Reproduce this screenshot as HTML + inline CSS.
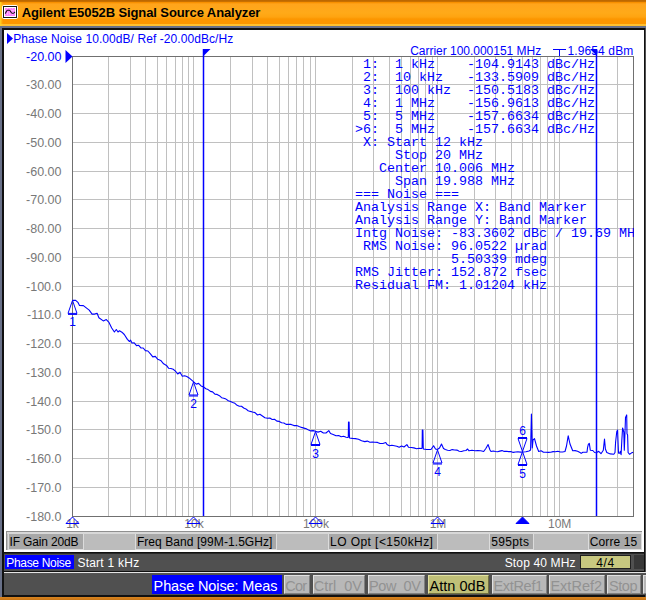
<!DOCTYPE html>
<html><head><meta charset="utf-8"><title>Agilent E5052B Signal Source Analyzer</title>
<style>
html,body{margin:0;padding:0;}
body{width:646px;height:600px;overflow:hidden;position:relative;background:#000;font-family:"Liberation Sans",sans-serif;}
div{position:absolute;box-sizing:border-box;white-space:pre;}
#title{left:0;top:0;width:646px;height:26px;background:linear-gradient(to bottom,#b86400 0px,#c87000 1.5px,#f89000 2.5px,#ffa41c 4px,#ffaa18 13px,#ffa410 17px,#fc9600 19px,#fc9600 23.5px,#ffc030 24.5px,#ffc030 26px);}
#ttext{left:22px;top:5px;font-weight:bold;font-size:13.5px;line-height:16px;color:#000;transform-origin:0 0;}
#frame{left:0;top:26px;width:646px;height:571px;background:#687088;}
#frame2{left:2px;top:28px;width:643px;height:569px;background:#101010;}
#white{left:4px;top:30px;width:640px;height:522px;background:#fff;}
#rt{left:645px;top:28px;width:1px;height:569px;background:#505050;}
#strip{left:6px;top:531px;width:636px;height:19px;background:#bcbcbc;border-top:1px solid #909090;border-left:1px solid #909090;box-shadow:inset 0 2px 0 #d8d8d8;}
.sb{top:534px;height:16px;background:#a8a8a8;border:1px solid #dcdcdc;border-top:none;}
#bar1{left:4px;top:553px;width:640px;height:18px;background:#505050;border-top:1px solid #282828;}
#pn{left:5px;top:555px;width:69px;height:14px;background:#0000ff;color:#fff;font-size:12.5px;line-height:14px;text-align:center;}
.w{color:#fff;font-size:12.5px;line-height:14px;top:555px;}
#pg{left:580px;top:555px;width:51px;height:14px;background:#c8c880;border:1px solid #202020;color:#000;font-size:12.5px;line-height:14px;text-align:center;}
#dk{left:634px;top:555px;width:10px;height:14px;background:#383838;}
#hl{left:4px;top:572px;width:642px;height:2px;background:#e4e4e4;border-bottom:1px solid #555;}
#bar2{left:4px;top:574px;width:642px;height:21px;background:#505050;}
.bb{top:575px;height:19px;background:#b8b8b8;border:1px solid #d8d8d8;}
#orange{left:0;top:597px;width:646px;height:3px;background:linear-gradient(#d88420,#c87414);}
svg{position:absolute;left:0;top:0;}
.mk{fill:none;stroke:#0000ff;stroke-width:1;}
.xf{fill:#0000ff;stroke:#0000ff;stroke-width:1;}
.ml{fill:#0000ff;font-family:"Liberation Sans",sans-serif;font-size:12px;text-anchor:middle;}
.yl{left:20px;width:41.5px;text-align:right;font-size:12.5px;line-height:14px;}
.xl{top:516.7px;width:40px;text-align:center;font-size:12px;line-height:14px;color:#787878;}
#hdr{left:14.5px;top:31px;font-size:12.5px;line-height:15px;color:#0000ff;}
#car{left:410px;top:43px;font-size:12px;line-height:14px;color:#0000ff;}
#car2{left:567px;top:43px;font-size:12px;line-height:14px;color:#0000ff;}
#mono{left:355px;top:57.6px;width:278.5px;overflow:hidden;font-family:"Liberation Mono",monospace;font-size:13.33px;line-height:13px;color:#0000ff;}
</style></head><body>
<div id="title"></div><div style="left:0;top:2px;width:3px;height:24px;background:linear-gradient(to right,#ffd428,rgba(255,200,40,0))"></div><svg id="icon" width="20" height="24" viewBox="0 0 20 24" style="left:0;top:0"><rect x="2" y="5" width="16" height="14" rx="2.2" fill="#fff"/><rect x="3.5" y="6.5" width="13" height="11" fill="#fff" stroke="#181818" stroke-width="1"/><rect x="5" y="8" width="10" height="8" fill="#ff84ff"/><path d="M5,10.5 H15 M5,13.5 H15 M7.5,8 V16 M10,8 V16 M12.5,8 V16" stroke="#ffd0ff" stroke-width="0.6" stroke-dasharray="1 1" fill="none"/><path d="M5.2,13.7 C6.2,12.4 6.4,10.3 7.6,10.3 L9.4,10.3 C10.6,10.3 10.9,13.3 12.1,13.3 L13.2,13.3 C14.1,13.3 14.4,12.4 14.9,12" fill="none" stroke="#101010" stroke-width="1.1"/></svg>
<div style="left:21.7px;top:5.4px;font-size:13px;line-height:16px;color:#000;letter-spacing:-0.10px;font-weight:bold;">Agilent E5052B Signal Source Analyzer</div>
<div id="frame"></div><div id="frame2"></div><div id="white"></div><div id="rt"></div>
<div class="yl" style="top:50.40px;color:#0000ff">-20.00</div><div class="yl" style="top:78.40px;color:#787878">-30.00</div><div class="yl" style="top:107.40px;color:#787878">-40.00</div><div class="yl" style="top:136.40px;color:#787878">-50.00</div><div class="yl" style="top:165.40px;color:#787878">-60.00</div><div class="yl" style="top:193.40px;color:#787878">-70.00</div><div class="yl" style="top:222.40px;color:#787878">-80.00</div><div class="yl" style="top:251.40px;color:#787878">-90.00</div><div class="yl" style="top:280.40px;color:#787878">-100.0</div><div class="yl" style="top:308.40px;color:#787878">-110.0</div><div class="yl" style="top:337.40px;color:#787878">-120.0</div><div class="yl" style="top:366.40px;color:#787878">-130.0</div><div class="yl" style="top:395.40px;color:#787878">-140.0</div><div class="yl" style="top:423.40px;color:#787878">-150.0</div><div class="yl" style="top:452.40px;color:#787878">-160.0</div><div class="yl" style="top:481.40px;color:#787878">-170.0</div><div class="yl" style="top:510.40px;color:#787878">-180.0</div>
<div class="xl" style="left:52.5px">1k</div><div class="xl" style="left:174.0px">10k</div><div class="xl" style="left:296.0px">100k</div><div class="xl" style="left:418.0px">1M</div><div class="xl" style="left:539.7px">10M</div>
<svg id="plot" width="646" height="600" viewBox="0 0 646 600">
<g stroke="#c0c0c0" stroke-width="1" shape-rendering="crispEdges"><line x1="73" y1="84.5" x2="633" y2="84.5"/><line x1="73" y1="113.5" x2="633" y2="113.5"/><line x1="73" y1="142.5" x2="633" y2="142.5"/><line x1="73" y1="171.5" x2="633" y2="171.5"/><line x1="73" y1="199.5" x2="633" y2="199.5"/><line x1="73" y1="228.5" x2="633" y2="228.5"/><line x1="73" y1="257.5" x2="633" y2="257.5"/><line x1="73" y1="286.5" x2="633" y2="286.5"/><line x1="73" y1="314.5" x2="633" y2="314.5"/><line x1="73" y1="343.5" x2="633" y2="343.5"/><line x1="73" y1="372.5" x2="633" y2="372.5"/><line x1="73" y1="401.5" x2="633" y2="401.5"/><line x1="73" y1="429.5" x2="633" y2="429.5"/><line x1="73" y1="458.5" x2="633" y2="458.5"/><line x1="73" y1="487.5" x2="633" y2="487.5"/><line x1="108.5" y1="57" x2="108.5" y2="516"/><line x1="130.5" y1="57" x2="130.5" y2="516"/><line x1="145.5" y1="57" x2="145.5" y2="516"/><line x1="157.5" y1="57" x2="157.5" y2="516"/><line x1="166.5" y1="57" x2="166.5" y2="516"/><line x1="175.5" y1="57" x2="175.5" y2="516"/><line x1="182.5" y1="57" x2="182.5" y2="516"/><line x1="188.5" y1="57" x2="188.5" y2="516"/><line x1="193.5" y1="57" x2="193.5" y2="516"/><line x1="230.5" y1="57" x2="230.5" y2="516"/><line x1="252.5" y1="57" x2="252.5" y2="516"/><line x1="267.5" y1="57" x2="267.5" y2="516"/><line x1="279.5" y1="57" x2="279.5" y2="516"/><line x1="288.5" y1="57" x2="288.5" y2="516"/><line x1="296.5" y1="57" x2="296.5" y2="516"/><line x1="303.5" y1="57" x2="303.5" y2="516"/><line x1="310.5" y1="57" x2="310.5" y2="516"/><line x1="315.5" y1="57" x2="315.5" y2="516"/><line x1="352.5" y1="57" x2="352.5" y2="516"/><line x1="373.5" y1="57" x2="373.5" y2="516"/><line x1="389.5" y1="57" x2="389.5" y2="516"/><line x1="401.5" y1="57" x2="401.5" y2="516"/><line x1="410.5" y1="57" x2="410.5" y2="516"/><line x1="418.5" y1="57" x2="418.5" y2="516"/><line x1="425.5" y1="57" x2="425.5" y2="516"/><line x1="432.5" y1="57" x2="432.5" y2="516"/><line x1="437.5" y1="57" x2="437.5" y2="516"/><line x1="474.5" y1="57" x2="474.5" y2="516"/><line x1="495.5" y1="57" x2="495.5" y2="516"/><line x1="511.5" y1="57" x2="511.5" y2="516"/><line x1="522.5" y1="57" x2="522.5" y2="516"/><line x1="532.5" y1="57" x2="532.5" y2="516"/><line x1="540.5" y1="57" x2="540.5" y2="516"/><line x1="547.5" y1="57" x2="547.5" y2="516"/><line x1="554.5" y1="57" x2="554.5" y2="516"/><line x1="559.5" y1="57" x2="559.5" y2="516"/><line x1="596.5" y1="57" x2="596.5" y2="516"/><line x1="617.5" y1="57" x2="617.5" y2="516"/></g>
<rect x="72.5" y="56.5" width="561" height="460" fill="none" stroke="#707070" stroke-width="1" shape-rendering="crispEdges"/>
<path d="M203.5,49 L203.5,516" stroke="#0000ff" stroke-width="1.5" fill="none"/>
<path d="M203,49 L210.5,49 L203.5,56 Z" fill="#0000ff"/>
<path d="M596.5,49 L596.5,516" stroke="#0000ff" stroke-width="1.5" fill="none"/>
<path d="M590,49 L597,49 L597,56 Z" fill="#0000ff"/>
<path d="M553,49.5 L566,49.5 M559.5,49.5 L559.5,56" stroke="#0000ff" stroke-width="1" fill="none"/>
<path d="M65.5,50 L72.5,56.5 L65.5,63 Z" fill="#0000ff"/>
<path d="M7,33 L13,38.5 L7,44 Z" fill="#0000ff"/>
<path d="M72.5,300.4 L75.4,300.2 L77.9,302.3 L79.5,305.4 L83.4,305.6 L86.3,307.9 L89.2,310.1 L92.1,314.1 L94.6,314.1 L97.1,313.2 L98.9,317.8 L103.3,320.9 L106.3,319.6 L109.0,322.4 L111.7,328.0 L114.4,332.0 L116.3,329.5 L118.0,332.0 L119.5,330.8 L121.9,332.2 L124.3,334.5 L127.4,339.4 L129.5,341.5 L130.6,340.2 L132.0,343.0 L134.2,342.9 L136.5,345.6 L138.7,345.3 L140.9,347.9 L143.2,348.0 L145.4,350.6 L147.9,351.0 L150.4,353.8 L152.8,356.9 L155.3,356.4 L157.8,359.3 L160.7,360.4 L163.6,363.8 L166.5,365.4 L168.7,368.3 L170.9,368.5 L173.2,369.3 L175.4,371.1 L177.7,374.0 L180.0,372.3 L182.3,376.3 L184.6,375.8 L186.8,376.6 L189.1,377.9 L191.4,379.8 L193.7,381.8 L196.2,384.1 L198.6,383.4 L201.1,385.9 L203.6,387.0 L205.9,388.7 L208.1,389.6 L210.4,391.4 L212.6,391.9 L214.9,394.2 L217.1,394.4 L219.4,395.7 L221.6,397.7 L223.8,398.3 L226.0,399.1 L228.3,400.7 L230.5,401.6 L232.7,402.5 L234.9,403.3 L237.1,405.3 L239.3,406.2 L241.5,406.3 L243.7,408.0 L245.9,408.9 L248.1,410.7 L250.3,411.4 L252.5,412.0 L255.0,412.6 L257.5,415.0 L259.9,414.3 L262.4,416.0 L264.9,417.7 L267.4,418.2 L269.8,418.1 L272.2,419.5 L274.5,419.2 L276.9,421.1 L279.3,421.4 L281.6,422.7 L283.9,423.0 L286.1,424.4 L288.4,424.4 L291.1,424.4 L293.9,425.6 L296.6,425.6 L299.1,426.6 L301.5,427.4 L304.0,428.1 L306.3,428.7 L308.6,430.1 L310.8,430.9 L313.1,430.6 L315.4,431.3 L318.0,432.1 L320.7,431.3 L323.4,433.0 L326.0,433.0 L328.8,430.6 L330.5,433.5 L333.2,434.4 L336.0,435.7 L338.7,435.5 L341.2,436.7 L343.6,436.3 L346.1,437.3 L347.8,437.5 L348.3,437.0 L348.5,422.0 L349.1,422.0 L349.5,438.0 L352.4,438.4 L355.4,438.6 L358.5,439.3 L361.6,440.8 L364.8,441.6 L367.3,441.1 L369.9,442.2 L372.4,442.0 L374.9,442.2 L377.5,442.4 L380.0,443.5 L382.9,443.5 L385.8,442.5 L387.0,444.5 L389.5,445.8 L391.9,445.3 L394.3,445.7 L396.8,446.2 L399.2,447.3 L401.6,446.0 L404.0,447.0 L406.9,444.6 L408.5,447.3 L411.2,447.5 L413.9,447.9 L416.6,448.7 L419.3,448.3 L421.5,448.5 L422.1,448.0 L422.3,430.0 L422.9,430.0 L423.3,449.0 L426.7,449.5 L431.0,449.5 L433.6,445.8 L435.5,449.0 L437.3,449.5 L439.5,448.0 L441.5,444.1 L443.5,448.5 L445.3,449.5 L447.6,450.2 L449.9,450.5 L452.2,449.6 L454.6,450.0 L456.9,450.1 L459.2,451.2 L461.5,451.5 L463.8,450.8 L466.0,450.5 L467.6,449.0 L469.0,450.8 L472.0,450.2 L475.0,450.8 L477.9,450.5 L480.8,450.8 L483.7,451.5 L486.0,448.3 L488.1,444.6 L490.0,450.0 L491.0,451.5 L493.2,451.0 L495.4,451.5 L497.6,451.7 L499.8,451.1 L502.0,450.6 L504.2,451.4 L506.4,451.3 L508.6,451.6 L510.8,451.5 L513.2,452.4 L515.6,452.0 L517.9,451.8 L520.3,452.1 L522.7,452.0 L525.9,451.8 L529.0,451.0 L530.6,450.0 L531.4,414.0 L532.3,448.0 L533.0,440.0 L534.5,438.7 L536.5,446.0 L538.7,451.5 L541.1,450.8 L543.5,452.3 L545.9,452.2 L548.3,452.4 L550.7,452.3 L553.1,451.6 L555.5,451.7 L557.9,451.2 L560.3,452.0 L562.6,452.0 L565.0,451.5 L566.5,446.0 L568.2,435.9 L570.0,444.0 L572.7,450.8 L575.1,450.6 L577.6,451.2 L580.0,452.5 L581.2,453.4 L582.9,452.3 L587.0,452.2 L587.6,447.3 L588.4,444.1 L589.3,443.4 L590.3,450.2 L592.8,450.5 L594.6,452.5 L596.3,452.7 L598.7,451.3 L601.0,453.7 L603.3,450.2 L604.5,439.1 L605.4,449.0 L606.8,452.5 L610.3,453.9 L613.8,454.3 L615.0,452.5 L615.6,442.0 L616.8,431.5 L617.6,430.1 L618.0,440.8 L618.5,453.1 L619.7,453.1 L620.3,451.3 L621.1,454.6 L621.8,440.8 L622.6,428.0 L623.8,432.0 L624.3,450.2 L624.9,435.0 L625.5,417.5 L626.7,414.9 L627.0,433.8 L627.6,435.0 L628.1,452.5 L629.6,454.3 L631.3,453.1 L633.1,452.3" fill="none" stroke="#0000ff" stroke-width="1.1" stroke-linejoin="round"/>
<g><path d="M72.5,300.4 L68.0,313.4 L77.0,313.4 Z M68.0,314.4 L77.0,314.4" class="mk"/><text x="72.5" y="326.4" class="ml">1</text><path d="M193.5,382 L189.0,395 L198.0,395 Z M189.0,396 L198.0,396" class="mk"/><text x="193.5" y="408" class="ml">2</text><path d="M315.5,431.5 L311.0,444.5 L320.0,444.5 Z M311.0,445.5 L320.0,445.5" class="mk"/><text x="315.5" y="457.5" class="ml">3</text><path d="M437.5,450 L433.0,463 L442.0,463 Z M433.0,464 L442.0,464" class="mk"/><text x="437.5" y="476" class="ml">4</text><path d="M522.5,451.5 L518.0,464.5 L527.0,464.5 Z M518.0,465.5 L527.0,465.5" class="mk"/><text x="522.5" y="477.5" class="ml">5</text><path d="M522.5,451.5 L518.0,438.5 L527.0,438.5 Z M518.0,437.5 L527.0,437.5" class="mk"/><text x="522.5" y="435.0" class="ml">6</text><path d="M72.5,517 L66.0,523.5 L79.0,523.5 Z" class="mk"/><path d="M193.5,517 L187.0,523.5 L200.0,523.5 Z" class="mk"/><path d="M315.5,517 L309.0,523.5 L322.0,523.5 Z" class="mk"/><path d="M437.5,517 L431.0,523.5 L444.0,523.5 Z" class="mk"/><path d="M522.5,517 L516.0,523.5 L529.0,523.5 Z" class="xf"/></g>
</svg>
<div style="left:13.2px;top:32px;font-size:12px;line-height:14px;color:#0000ff;letter-spacing:0.07px;">Phase Noise 10.00dB/ Ref -20.00dBc/Hz</div>
<div style="left:410.2px;top:43.6px;font-size:12px;line-height:14px;color:#0000ff;letter-spacing:-0.02px;">Carrier 100.000151 MHz</div><div style="left:567.4px;top:43.6px;font-size:12px;line-height:14px;color:#0000ff;letter-spacing:0.13px;">1.9654 dBm</div>
<div id="mono"> 1:  1 kHz    -104.9143 dBc/Hz
 2:  10 kHz   -133.5909 dBc/Hz
 3:  100 kHz  -150.5183 dBc/Hz
 4:  1 MHz    -156.9613 dBc/Hz
 5:  5 MHz    -157.6634 dBc/Hz
&gt;6:  5 MHz    -157.6634 dBc/Hz
 X: Start 12 kHz
     Stop 20 MHz
   Center 10.006 MHz
     Span 19.988 MHz
=== Noise ===
Analysis Range X: Band Marker
Analysis Range Y: Band Marker
Intg Noise: -83.3602 dBc / 19.69 MHz
 RMS Noise: 96.0522 µrad
            5.50339 mdeg
RMS Jitter: 152.872 fsec
Residual FM: 1.01204 kHz</div>
<div id="strip"></div>
<div class="sb" style="left:8px;width:76px"></div><div style="left:9.5px;top:535px;font-size:12px;line-height:14px;color:#000;letter-spacing:-0.15px;">IF Gain 20dB</div>
<div class="sb" style="left:135px;width:142px"></div><div style="left:136.9px;top:535px;font-size:12px;line-height:14px;color:#000;letter-spacing:0.07px;">Freq Band [99M-1.5GHz]</div>
<div class="sb" style="left:328px;width:110px"></div><div style="left:330.1px;top:535px;font-size:12px;line-height:14px;color:#000;letter-spacing:0.43px;">LO Opt [&lt;150kHz]</div>
<div class="sb" style="left:489px;width:45px"></div><div style="left:491.2px;top:535px;font-size:12px;line-height:14px;color:#000;letter-spacing:0.36px;">595pts</div>
<div class="sb" style="left:588px;width:54px"></div><div style="left:589.8px;top:535px;font-size:12px;line-height:14px;color:#000;letter-spacing:0.09px;">Corre 15</div>
<div id="bar1"></div><div id="pn"></div>
<div style="left:6.3px;top:556px;font-size:12px;line-height:14px;color:#fff;letter-spacing:-0.32px;">Phase Noise</div>
<div style="left:77.4px;top:556px;font-size:12px;line-height:14px;color:#fff;letter-spacing:0.24px;">Start 1 kHz</div>
<div style="left:504.7px;top:556px;font-size:12px;line-height:14px;color:#fff;letter-spacing:0.15px;">Stop 40 MHz</div>
<div id="pg"></div><div style="left:596.2px;top:556px;font-size:12px;line-height:14px;color:#000;letter-spacing:0.60px;">4/4</div><div id="dk"></div>
<div id="hl"></div><div id="bar2"></div>
<div class="bb" style="left:152px;width:130px;background:#0000ff;border-color:#0000ff"></div><div style="left:153.6px;top:577.5px;font-size:14.5px;line-height:17px;color:#fff;letter-spacing:-0.12px;">Phase Noise: Meas</div>
<div class="bb" style="left:284px;width:26px;background:#b8b8b8;border-color:#e0e0e0 #808080 #808080 #e0e0e0"></div><div style="left:285.3px;top:577.5px;font-size:14.5px;line-height:17px;color:#929292;letter-spacing:-0.79px;">Cor</div>
<div class="bb" style="left:313px;width:52px;background:#b8b8b8;border-color:#e0e0e0 #808080 #808080 #e0e0e0"></div><div style="left:313.8px;top:577.5px;font-size:14.5px;line-height:17px;color:#929292;letter-spacing:-0.02px;">Ctrl  0V</div>
<div class="bb" style="left:368px;width:57px;background:#b8b8b8;border-color:#e0e0e0 #808080 #808080 #e0e0e0"></div><div style="left:369.0px;top:577.5px;font-size:14.5px;line-height:17px;color:#929292;letter-spacing:-0.33px;">Pow  0V</div>
<div class="bb" style="left:428px;width:61px;background:#c0c078;border-color:#e0e0a0 #707040 #707040 #e0e0a0"></div><div style="left:429.5px;top:577.5px;font-size:14.5px;line-height:17px;color:#000;letter-spacing:0.03px;">Attn 0dB</div>
<div class="bb" style="left:492px;width:55px;background:#b8b8b8;border-color:#e0e0e0 #808080 #808080 #e0e0e0"></div><div style="left:493.4px;top:577.5px;font-size:14.5px;line-height:17px;color:#929292;letter-spacing:-0.30px;">ExtRef1</div>
<div class="bb" style="left:549px;width:56px;background:#b8b8b8;border-color:#e0e0e0 #808080 #808080 #e0e0e0"></div><div style="left:550.4px;top:577.5px;font-size:14.5px;line-height:17px;color:#929292;letter-spacing:0.02px;">ExtRef2</div>
<div class="bb" style="left:607px;width:34px;background:#b8b8b8;border-color:#e0e0e0 #808080 #808080 #e0e0e0"></div><div style="left:608.9px;top:577.5px;font-size:14.5px;line-height:17px;color:#929292;letter-spacing:-0.39px;">Stop</div>
<div class="bb" style="left:643px;width:12px;background:#b8b8b8;border-color:#e0e0e0 #808080 #808080 #e0e0e0"></div>
<div id="orange"></div>
</body></html>
